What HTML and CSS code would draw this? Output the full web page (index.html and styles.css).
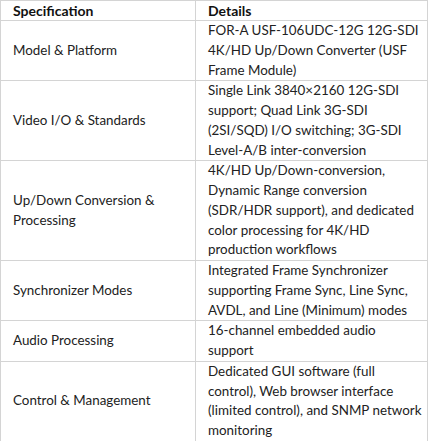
FILE: index.html
```html
<!DOCTYPE html>
<html lang="en">
<head>
<meta charset="utf-8">
<title>Specifications</title>
<link rel="stylesheet" href="styles.css">
</head>
<body>
<table class="spec">
  <thead>
    <tr><th class="c1">Specification</th><th class="c2">Details</th></tr>
  </thead>
  <tbody>
    <tr><td>Model &amp; Platform</td><td>FOR-A USF-106UDC-12G 12G-SDI 4K/HD Up/Down Converter (USF Frame Module)</td></tr>
    <tr><td>Video I/O &amp; Standards</td><td>Single Link 3840×2160 12G-SDI support; Quad Link 3G-SDI (2SI/SQD) I/O switching; 3G-SDI Level-A/B inter-conversion</td></tr>
    <tr><td>Up/Down Conversion &amp; Processing</td><td>4K/HD Up/Down-conversion, Dynamic Range conversion (SDR/HDR support), and dedicated color processing for 4K/HD production workflows</td></tr>
    <tr><td>Synchronizer Modes</td><td>Integrated Frame Synchronizer supporting Frame Sync, Line Sync, AVDL, and Line (Minimum) modes</td></tr>
    <tr><td>Audio Processing</td><td>16-channel embedded audio support</td></tr>
    <tr><td>Control &amp; Management</td><td>Dedicated GUI software (full control), Web browser interface (limited control), and SNMP network monitoring</td></tr>
  </tbody>
</table>
</body>
</html>
```
FILE: styles.css
```css
html, body {
  margin: 0;
  padding: 0;
  background: #fff;
}
.spec {
  border-collapse: collapse;
  width: 428px;
  font-family: Lato, "Open Sans", sans-serif;
  font-size: 13.4px;
  line-height: 19.75px;
  color: #222;
  table-layout: fixed;
}
.spec th, .spec td {
  border: 1px solid #d4d4d4;
  padding: 0 4px 0 12px;
  text-align: left;
  vertical-align: middle;
}
.spec th {
  font-size: 14px;
  line-height: 19px;
  font-weight: bold;
  color: #111;
}
.spec .c1 { width: 178px; }
```
